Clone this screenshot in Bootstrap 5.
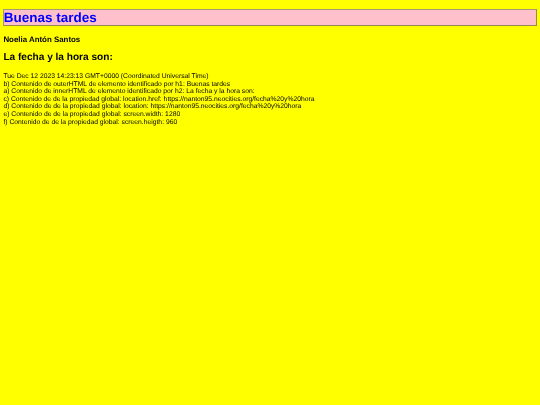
<!DOCTYPE html>
<html lang="es">
<head>
<meta charset="utf-8">
<title>La fecha y la hora</title>
<link href="https://cdn.jsdelivr.net/npm/bootstrap@5.3.0/dist/css/bootstrap.min.css" rel="stylesheet">
<style>
html, body { background: #ffff00; }
body { font-family: "Liberation Sans", Arial, sans-serif; color: #000; font-size: 6.75px; line-height: 7.6px; padding: 8.5px 3.4px 0; min-height: 405px; text-rendering: geometricPrecision; }
.contenido { filter: blur(0.22px); }
.saludo { font-family: inherit; font-size: 13.5px; line-height: 15.5px; font-weight: 700; color: #0000ff; background: #ffc0cb; border: 1px solid; border-color: #a89a70 #9a8a50 #9a8a50 #a89a70; margin: 0 0 9px; padding: 0; text-indent: -0.7px; }
.autora { font-size: 7.9px; line-height: 9px; font-weight: 700; margin: 0 0 8px; }
.subtitulo { font-family: inherit; font-size: 10.1px; line-height: 12px; font-weight: 700; margin: 0 0 9px; }
.datos { margin: 0; }
</style>
</head>
<body>
<div class="contenido">
<h1 class="saludo">Buenas tardes</h1>
<p class="autora">Noelia Antón Santos</p>
<h2 class="subtitulo">La fecha y la hora son:</h2>
<p class="datos">Tue Dec 12 2023 14:23:13 GMT+0000 (Coordinated Universal Time)<br>
b) Contenido de outerHTML de elemento identificado por h1: Buenas tardes<br>
a) Contenido de innerHTML de elemento identificado por h2: La fecha y la hora son:<br>
c) Contenido de de la propiedad global: location.href: https://nanton95.neocities.org/fecha%20y%20hora<br>
d) Contenido de de la propiedad global: location: https://nanton95.neocities.org/fecha%20y%20hora<br>
e) Contenido de de la propiedad global: screen.width: 1280<br>
f) Contenido de de la propiedad global: screen.heigth: 960</p>
</div>
<script src="https://cdn.jsdelivr.net/npm/bootstrap@5.3.0/dist/js/bootstrap.bundle.min.js"></script>
</body>
</html>
